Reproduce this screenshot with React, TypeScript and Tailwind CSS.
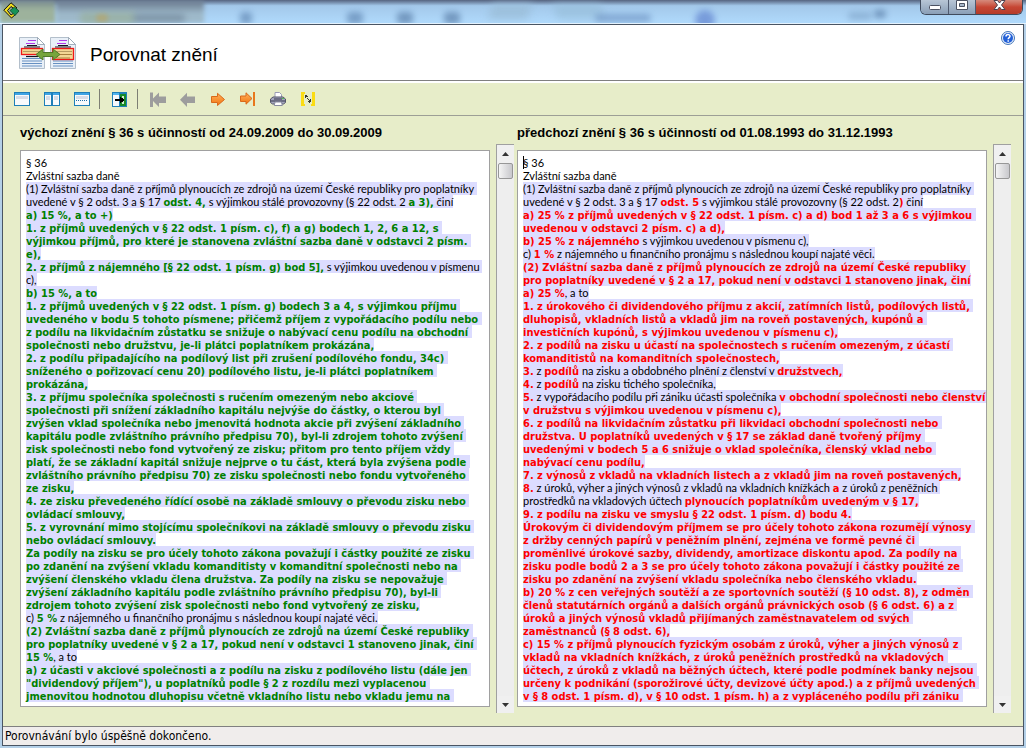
import React from "react";

const LEFT: string[] = [
  "§ 36",
  "Zvláštní sazba daně",
  "(1) Zvláštní sazba daně z příjmů plynoucích ze zdrojů na území České republiky pro poplatníky ",
  "uvedené v § 2 odst. 3 a § 17 |odst. 4,| s výjimkou stálé provozovny (§ 22 odst. 2 |a 3),| činí",
  "|a) 15 %, a to +)",
  "|1. z příjmů uvedených v § 22 odst. 1 písm. c), f) a g) bodech 1, 2, 6 a 12, s ",
  "|výjimkou příjmů, pro které je stanovena zvláštní sazba daně v odstavci 2 písm. ",
  "|e),",
  "|2. z příjmů z nájemného [§ 22 odst. 1 písm. g) bod 5],| s výjimkou uvedenou v písmenu ",
  "c),",
  "|b) 15 %, a to",
  "|1. z příjmů uvedených v § 22 odst. 1 písm. g) bodech 3 a 4, s výjimkou příjmu ",
  "|uvedeného v bodu 5 tohoto písmene; přičemž příjem z vypořádacího podílu nebo ",
  "|z podílu na likvidačním zůstatku se snižuje o nabývací cenu podílu na obchodní ",
  "|společnosti nebo družstvu, je-li plátci poplatníkem prokázána,",
  "|2. z podílu připadajícího na podílový list při zrušení podílového fondu, 34c) ",
  "|sníženého o pořizovací cenu 20) podílového listu, je-li plátci poplatníkem ",
  "|prokázána,",
  "|3. z příjmu společníka společnosti s ručením omezeným nebo akciové ",
  "|společnosti při snížení základního kapitálu nejvýše do částky, o kterou byl ",
  "|zvýšen vklad společníka nebo jmenovitá hodnota akcie při zvýšení základního ",
  "|kapitálu podle zvláštního právního předpisu 70), byl-li zdrojem tohoto zvýšení ",
  "|zisk společnosti nebo fond vytvořený ze zisku; přitom pro tento příjem vždy ",
  "|platí, že se základní kapitál snižuje nejprve o tu část, která byla zvýšena podle ",
  "|zvláštního právního předpisu 70) ze zisku společnosti nebo fondu vytvořeného ",
  "|ze zisku,",
  "|4. ze zisku převedeného řídící osobě na základě smlouvy o převodu zisku nebo ",
  "|ovládací smlouvy,",
  "|5. z vyrovnání mimo stojícímu společníkovi na základě smlouvy o převodu zisku ",
  "|nebo ovládací smlouvy.",
  "|Za podíly na zisku se pro účely tohoto zákona považují i částky použité ze zisku ",
  "|po zdanění na zvýšení vkladu komanditisty v komanditní společnosti nebo na ",
  "|zvýšení členského vkladu člena družstva. Za podíly na zisku se nepovažuje ",
  "|zvýšení základního kapitálu podle zvláštního právního předpisu 70), byl-li ",
  "|zdrojem tohoto zvýšení zisk společnosti nebo fond vytvořený ze zisku,",
  "c) |5 %| z nájemného u finančního pronájmu s následnou koupí najaté věci.",
  "|(2) Zvláštní sazba daně z příjmů plynoucích ze zdrojů na území České republiky ",
  "|pro poplatníky uvedené v § 2 a 17, pokud není v odstavci 1 stanoveno jinak, činí ",
  "|15 %|, a to",
  "|a) z účasti v akciové společnosti a z podílu na zisku z podílového listu (dále jen ",
  "|\"dividendový příjem\"), u poplatníků podle § 2 z rozdílu mezi vyplacenou ",
  "|jmenovitou hodnotou dluhopisu včetně vkladního listu nebo vkladu jemu na ",
];

const RIGHT: string[] = [
  "§ 36",
  "Zvláštní sazba daně",
  "(1) Zvláštní sazba daně z příjmů plynoucích ze zdrojů na území České republiky pro poplatníky ",
  "uvedené v § 2 odst. 3 a § 17 |odst. 5| s výjimkou stálé provozovny (§ 22 odst. 2|)| činí",
  "|a) 25 % z příjmů uvedených v § 22 odst. 1 písm. c) a d) bod 1 až 3 a 6 s výjimkou ",
  "|uvedenou v odstavci 2 písm. c) a d),",
  "|b) 25 % z nájemného| s výjimkou uvedenou v písmenu c),",
  "c) |1 %| z nájemného u finančního pronájmu s následnou koupí najaté věci.",
  "|(2) Zvláštní sazba daně z příjmů plynoucích ze zdrojů na území České republiky ",
  "|pro poplatníky uvedené v § 2 a 17, pokud není v odstavci 1 stanoveno jinak, činí",
  "|a) 25 %|, a to",
  "|1. z úrokového či dividendového příjmu z akcií, zatímních listů, podílových listů, ",
  "|dluhopisů, vkladních listů a vkladů jim na roveň postavených, kupónů a ",
  "|investičních kupónů, s výjimkou uvedenou v písmenu c),",
  "|2. z podílů na zisku u účastí na společnostech s ručením omezeným, z účastí ",
  "|komanditistů na komanditních společnostech,",
  "|3.| z |podílů| na zisku a obdobného plnění z členství v |družstvech,",
  "|4.| z |podílů| na zisku tichého společníka,",
  "|5.| z vypořádacího podílu při zániku účasti společníka |v obchodní společnosti nebo členství ",
  "|v družstvu s výjimkou uvedenou v písmenu c),",
  "|6. z podílů na likvidačním zůstatku při likvidaci obchodní společnosti nebo ",
  "|družstva. U poplatníků uvedených v § 17 se základ daně tvořený příjmy ",
  "|uvedenými v bodech 5 a 6 snižuje o vklad společníka, členský vklad nebo ",
  "|nabývací cenu podílu,",
  "|7. z výnosů z vkladů na vkladních listech a z vkladů jim na roveň postavených,",
  "|8.| z úroků, výher a jiných výnosů z vkladů na vkladních knížkách |a| z úroků z peněžních ",
  "prostředků na vkladových účtech |plynoucích poplatníkům uvedeným v § 17,",
  "|9. z podílu na zisku ve smyslu § 22 odst. 1 písm. d) bodu 4.",
  "|Úrokovým či dividendovým příjmem se pro účely tohoto zákona rozumějí výnosy ",
  "|z držby cenných papírů v peněžním plnění, zejména ve formě pevné či ",
  "|proměnlivé úrokové sazby, dividendy, amortizace diskontu apod. Za podíly na ",
  "|zisku podle bodů 2 a 3 se pro účely tohoto zákona považují i částky použité ze ",
  "|zisku po zdanění na zvýšení vkladu společníka nebo členského vkladu.",
  "|b) 20 % z cen veřejných soutěží a ze sportovních soutěží (§ 10 odst. 8), z odměn ",
  "|členů statutárních orgánů a dalších orgánů právnických osob (§ 6 odst. 6) a z ",
  "|úroků a jiných výnosů vkladů přijímaných zaměstnavatelem od svých ",
  "|zaměstnanců (§ 8 odst. 6),",
  "|c) 15 % z příjmů plynoucích fyzickým osobám z úroků, výher a jiných výnosů z ",
  "|vkladů na vkladních knížkách, z úroků peněžních prostředků na vkladových ",
  "|účtech, z úroků z vkladů na běžných účtech, které podle podmínek banky nejsou ",
  "|určeny k podnikání (sporožirové účty, devizové účty apod.) a z příjmů uvedených ",
  "|v § 8 odst. 1 písm. d), v § 10 odst. 1 písm. h) a z vypláceného podílu při zániku ",
];

type Tone = "green" | "red";

function Line({ text, tone, marked }: { text: string; tone: Tone; marked: boolean }) {
  const color = tone === "green" ? "text-[#008000]" : "text-[#ff0000]";
  return (
    <p className="flex h-[13px] whitespace-pre">
      <span className={marked ? "bg-[#dcdcff]" : ""}>
        {text.split("|").map((part, i) =>
          i % 2 ? (
            <b key={i} className={`font-['DejaVu_Sans_Condensed','DejaVu_Sans',sans-serif] ${color}`}>
              {part}
            </b>
          ) : (
            part
          ),
        )}
      </span>
    </p>
  );
}

function Scrollbar({ label }: { label: string }) {
  return (
    <div className="flex w-[18px] shrink-0 flex-col border-l border-t border-[#a0a0a0] bg-[#f0f0f0]">
      <button aria-label={`${label} nahoru`} className="flex h-[18px] items-center justify-center">
        <svg width="7" height="4" viewBox="0 0 7 4"><path d="M0 4 3.5 0 7 4z" fill="#333" /></svg>
      </button>
      <button
        aria-label={`${label} posuvník`}
        className="ml-px h-4 w-[15px] rounded-xs border border-[#979797] bg-linear-to-r from-[#f5f5f5] to-[#c8c8cc]"
      />
      <div className="flex-1 bg-[#eeeeee]" />
      <button aria-label={`${label} dolů`} className="flex h-[17px] items-center justify-center">
        <svg width="7" height="4" viewBox="0 0 7 4"><path d="M0 0 3.5 4 7 0z" fill="#333" /></svg>
      </button>
    </div>
  );
}

function Column({ title, lines, tone, caret }: { title: string; lines: string[]; tone: Tone; caret?: boolean }) {
  return (
    <section className="flex min-w-0 flex-col">
      <h2 className="h-7 whitespace-nowrap pt-2 text-[13px] leading-[18px] font-bold">{title}</h2>
      <div className="flex flex-1 gap-1.5">
        <div className="my-1.5 min-w-0 flex-1 overflow-hidden border border-[#a0a0a0] bg-white px-[5px] pt-[5px] pb-1">
          <div className="relative font-[Lato,sans-serif] text-[11px] leading-[13px]">
            {caret && <span className="absolute left-0 top-0 h-[13px] w-px bg-black" />}
            {lines.map((l, i) => (
              <Line key={i} text={l} tone={tone} marked={i > 1} />
            ))}
          </div>
        </div>
        <Scrollbar label={title} />
      </div>
    </section>
  );
}

const Win = ({ split, children }: { split?: boolean; children?: React.ReactNode }) => (
  <svg width="16" height="16" viewBox="0 0 16 16" shapeRendering="crispEdges">
    <rect x="0" y="1" width="16" height="14" fill="#1e7fb8" />
    <rect x="1" y="4" width="14" height="10" fill="#f8fafc" />
    <rect x="1" y="2" width="14" height="2" fill="#3fa4e4" />
    {split ? (
      <path d="M2 5h4v4H2zM10 5h4v4h-4z" fill="#d8dde8" />
    ) : (
      <rect x="2" y="5" width="12" height="3" fill="#d8dde8" />
    )}
    {children}
  </svg>
);

const PrevArrow = ({ bar }: { bar?: boolean }) => (
  <svg width="16" height="16" viewBox="0 0 16 16">
    {bar ? (
      <path d="M0 1.500h3v6l6-6v4h7v6.500H9v4l-6-6v6H0z" fill="#9d9d9d" />
    ) : (
      <path d="M0 8.800 7 1.800v3.700h8V12H7v4z" fill="#9d9d9d" />
    )}
  </svg>
);

const NextArrow = ({ bar }: { bar?: boolean }) => (
  <svg width="16" height="16" viewBox="0 0 16 16">
    <defs>
      <linearGradient id={bar ? "orangeLast" : "orangeNext"} x1="0" y1="0" x2="0" y2="1">
        <stop offset="0" stopColor="#ffb25c" />
        <stop offset="1" stopColor="#f27410" />
      </linearGradient>
    </defs>
    {bar ? (
      <>
        <path d="M.5 5h5.500V1.800L12 7.500 6 13.200V10.500H.5z" fill="url(#orangeLast)" stroke="#d9691a" />
        <path d="M13 1h2v14h-2z" fill="#e8771c" />
      </>
    ) : (
      <path d="M1.500 5.500H7.500V2.300L14.500 8.500l-7 6V11.500h-6z" fill="url(#orangeNext)" stroke="#d9691a" />
    )}
  </svg>
);

const Tool = ({ label, children }: { label: string; children: React.ReactNode }) => (
  <button aria-label={label} className="flex h-6 w-[30px] items-center justify-center">
    {children}
  </button>
);

const Sep = () => (
  <div className="flex h-5 w-2 pl-0.5">
    <div className="w-px bg-[#7d7f74]" />
  </div>
);

function DocPage({ x, tall }: { x: number; tall?: boolean }) {
  return (
    <g transform={`translate(${x} 0)`}>
      <path d="M.5.5H18.500l7 7v24H.5z" fill="#e9f0f8" stroke="#b3bfcb" />
      <path d="M18.500.5v7h7z" fill="#fff" stroke="#8d9cab" strokeWidth=".8" />
      <path d="M9 3.500h8M7 6.500h9" stroke="#b03be8" strokeWidth="1.200" />
      <path d="M8 8.500h10M5 10h16" stroke="#15151f" strokeWidth="1.200" />
      <path d="M3 21.500h20M3 24h20M3 26.500h20M3 29h20" stroke="#6690c2" strokeWidth="1.200" />
      {!tall && <path d="M7 19.500h12" stroke="#15151f" strokeWidth="1.200" />}
      <rect x="2.500" y="11.500" width="21" height={tall ? 11 : 6} fill="#f3d794" stroke="#f01818" strokeWidth="1.300" />
      <path d="M4 14.500h18" stroke="#b89c62" />
      {tall && <path d="M4 17.500h18M6 21h14" stroke="#a8803f" />}
    </g>
  );
}

const GlassButton = ({ label, wide, children }: { label: string; wide?: boolean; children: React.ReactNode }) => (
  <button
    aria-label={label}
    className={`flex items-center justify-center border-r border-[#4f5a70] bg-linear-to-b from-[#b8c6d6] to-[#8a9eb6] ${wide ? "w-7" : "w-[27px]"}`}
  >
    {children}
  </button>
);

export default function App() {
  return (
    <div className="flex min-h-screen flex-col bg-[#b4d0e8] pr-0.5 pb-0.5 pl-0.5 font-['Liberation_Sans',Arial,sans-serif] text-black">
      <div className="relative -mx-0.5 flex h-6 items-start justify-between overflow-hidden border-b border-[#e4f2fd] bg-linear-to-b from-[#566480] via-[#a3c8ea] via-25% to-[#b0dafc]">
        <div className="absolute inset-y-0 left-0 w-14 bg-linear-to-b from-[#71828a] to-[#9db29c] to-40% blur-[2px]" />
        <div className="absolute inset-y-0 left-14 w-37 bg-linear-to-b from-[#657488] to-[#9eb9ca] to-60% blur-[2px]" />
        <div className="absolute top-3 left-20 h-3 w-14 rounded bg-[#98b09c] opacity-70 blur-[3px]" />
        <div className="absolute top-3.5 left-[96px] h-2 w-3 rounded bg-[#b5a56c] opacity-70 blur-[2px]" />
        <div className="absolute top-3.5 left-[133px] h-2 w-13 rounded bg-[#71869a] opacity-70 blur-[3px]" />
        <div className="absolute top-3 left-[240px] h-3 w-3 rounded bg-[#6288b4] opacity-70 blur-[3px]" />
        <div className="absolute top-3 left-[347px] h-3 w-4 rounded bg-[#6288b4] opacity-70 blur-[3px]" />
        <div className="absolute top-3 left-[397px] h-3 w-4 rounded bg-[#5c80aa] opacity-70 blur-[3px]" />
        <div className="absolute top-3 left-[444px] h-3 w-4 rounded bg-[#5c80aa] opacity-70 blur-[3px]" />
        <div className="absolute inset-y-1 left-[490px] w-10 -skew-x-12 bg-[#9abdd8] opacity-80 blur-[4px]" />
        <div className="absolute inset-y-1 left-[555px] w-12 skew-x-12 bg-[#94bbd6] opacity-60 blur-[4px]" />
        <div className="absolute top-3.5 left-[595px] h-2 w-14 rounded bg-[#7095c4] opacity-70 blur-[3px]" />
        <div className="absolute top-2.5 left-[695px] h-5 w-5 rounded-full bg-[#6b8ed4] opacity-80 blur-[3px]" />
        <div className="absolute top-3 left-[848px] h-2 w-6 rounded bg-[#7a9fc4] opacity-60 blur-[3px]" />
        <div className="absolute top-2.5 left-[874px] h-2 w-3 rounded bg-[#567aa4] opacity-70 blur-[3px]" />
        <svg className="relative mt-0.5 ml-[3px]" width="17" height="17" viewBox="0 0 17 17">
          <path d="M8 .8 14 6l-2 1.500L8 4.500 4.500 8.500 8 13l3-2 1.800 1.200L8.500 16 .8 8.200z" fill="#f5e01c" stroke="#111" />
          <path d="M7 8.500 11.500 5 16 9l-4 4.500z" fill="#169357" stroke="#0a4426" strokeWidth=".8" />
        </svg>
        <div className="relative mr-[3px] flex h-[15px] overflow-hidden rounded-b-md border border-t-0 border-[#3f4a5c]">
          <GlassButton label="Minimalizovat" wide>
            <svg width="12" height="14" viewBox="0 0 12 14"><rect x=".5" y="5.500" width="11" height="4" rx="1" fill="#fff" stroke="#4c5262" /></svg>
          </GlassButton>
          <GlassButton label="Maximalizovat">
            <svg width="12" height="14" viewBox="0 0 12 14"><path d="M.5.5h11v9H.5zM3.500 3.500v3h5v-3z" fill="#fff" fillRule="evenodd" stroke="#4c5262" /></svg>
          </GlassButton>
          <button aria-label="Zavřít" className="flex w-[46px] items-center justify-center bg-linear-to-b from-[#d58a7c] via-[#c64634] to-[#b53a28]">
            <svg width="13" height="14" viewBox="0 0 13 14"><path d="M1 .5h3.500l2 2.500 2-2.500H12L8.500 5l3.500 4.500H8.500l-2-2.500-2 2.500H1L4.500 5z" fill="#fff" stroke="#4c4350" /></svg>
          </button>
        </div>
      </div>

      <div className="flex flex-1 flex-col border border-[#4a5563] bg-[#e7edc9]">
        <header className="flex h-[58px] flex-col border-b-2 border-white bg-white">
          <div className="flex flex-1 items-start justify-between border-b border-[#808080] pr-2 pl-4">
            <div className="flex items-end gap-3.5 pt-3">
              <svg width="57" height="32" viewBox="0 0 57 32">
                <DocPage x={0} />
                <DocPage x={31} tall />
                <path d="M17 17.500l7-5.500v3.500h10v-3.500l7 5.500-7 5.500v-3.500H24v3.500z" fill="#76a53c" stroke="#4f7a28" />
              </svg>
              <h1 className="text-[19px] leading-7">Porovnat znění</h1>
            </div>
            <button aria-label="Nápověda" className="mt-1.5">
              <svg width="14" height="14" viewBox="0 0 14 14">
                <circle cx="7" cy="7" r="6.500" fill="#e6effa" stroke="#4576b8" />
                <circle cx="7" cy="7" r="5" fill="#2360d8" />
                <path d="M5 5.500c0-2.600 4-2.500 4-.2C9 6.700 7.200 6.500 7.200 8.200M7.200 9.300v1.500" fill="none" stroke="#fff" strokeWidth="1.500" />
              </svg>
            </button>
          </div>
        </header>

        <nav className="flex h-[33px] items-center border-b border-[#9d9f96] pl-1">
          <Tool label="Jedno okno"><Win /></Tool>
          <Tool label="Okna vedle sebe">
            <Win split><rect x="7" y="1" width="2" height="14" fill="#1e7fb8" /></Win>
          </Tool>
          <Tool label="Okna pod sebou">
            <Win><path d="M2 9h1v1H2zM4 9h1v1H4zM6 9h1v1H6zM8 9h1v1H8zM10 9h1v1h-1zM12 9h1v1h-1z" fill="#1e6fa8" /></Win>
          </Tool>
          <Sep />
          <Tool label="Synchronizovat">
            <svg width="16" height="16" viewBox="0 0 16 16" shapeRendering="crispEdges">
              <rect y="1" width="15" height="15" fill="#1e7fb8" />
              <rect x="1" y="4" width="6" height="11" fill="#f4f7fb" />
              <rect x="1" y="2" width="6" height="2" fill="#4fb4ee" />
              <rect x="8" y="3" width="6" height="12" fill="#178a28" />
              <rect x="10" y="5" width="2" height="8" fill="#d5ead0" />
              <path d="M3 8h5V6h1v1h2v1h1v2h-1v1H9v1H8v-2H3z" fill="#000" />
            </svg>
          </Tool>
          <Sep />
          <Tool label="První"><PrevArrow bar /></Tool>
          <Tool label="Předchozí"><PrevArrow /></Tool>
          <Tool label="Další"><NextArrow /></Tool>
          <Tool label="Poslední"><NextArrow bar /></Tool>
          <Tool label="Tisk">
            <svg width="16" height="16" viewBox="0 0 16 16">
              <path d="M5 7V1.500h4.500l2 2V7z" fill="#fff" stroke="#9a9cb4" />
              <path d="M.5 8 3 6h10l2.500 2v3.500l-2 1.500h-11l-2-1.500z" fill="#a4a6be" stroke="#55576a" />
              <path d="M1 10h14M4 8h8" stroke="#34364a" />
              <path d="M5 11h6.500l.8 3.500h-8z" fill="#fff" stroke="#8a8ca0" />
              <rect x="12" y="7" width="2" height="1" fill="#4fc04f" />
            </svg>
          </Tool>
          <Tool label="Porovnání">
            <svg width="16" height="16" viewBox="0 0 16 16" shapeRendering="crispEdges">
              <path d="M1 1h4v2H4v10h1v2H1zM12 1h3v14h-4v-2h1z" fill="#fbdc12" />
              <path d="M5 4h2v1h1v1H6v1H5zM7 7h1v1H7zM8 8h1v1H8zM9 9h1V8h1v3h-1v1H9v-1H8v-1h1z" fill="#3a3a2a" />
            </svg>
          </Tool>
        </nav>

        <main className="grid flex-1 grid-cols-2 gap-[3px] pr-3 pb-[13px] pl-[17px]">
          <Column title="výchozí znění § 36 s účinností od 24.09.2009 do 30.09.2009" lines={LEFT} tone="green" />
          <Column title="předchozí znění § 36 s účinností od 01.08.1993 do 31.12.1993" lines={RIGHT} tone="red" caret />
        </main>

        <footer className="h-[19px] border-t border-[#808080] bg-[#f0edec] pl-0.5 font-['DejaVu_Sans_Condensed','DejaVu_Sans',sans-serif] text-[12px] leading-[19px]">
          Porovnávání bylo úspěšně dokončeno.
        </footer>
      </div>
    </div>
  );
}
